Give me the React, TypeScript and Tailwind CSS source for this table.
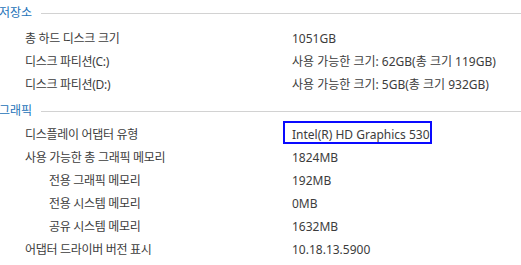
import React from "react";

type Row = { label: string; value: string; indent?: boolean; boxed?: boolean };

const storage: Row[] = [
  { label: "총 하드 디스크 크기", value: "1051GB" },
  { label: "디스크 파티션(C:)", value: "사용 가능한 크기: 62GB(총 크기 119GB)" },
  { label: "디스크 파티션(D:)", value: "사용 가능한 크기: 5GB(총 크기 932GB)" },
];

const graphics: Row[] = [
  { label: "디스플레이 어댑터 유형", value: "Intel(R) HD Graphics 530", boxed: true },
  { label: "사용 가능한 총 그래픽 메모리", value: "1824MB" },
  { label: "전용 그래픽 메모리", value: "192MB", indent: true },
  { label: "전용 시스템 메모리", value: "0MB", indent: true },
  { label: "공유 시스템 메모리", value: "1632MB", indent: true },
  { label: "어댑터 드라이버 버전 표시", value: "10.18.13.5900" },
];

function Header({ title }: { title: string }) {
  return (
    <div className="flex h-[23px] items-center">
      <span className="ml-[-1px] text-[12px] leading-[23px] text-[#2372b8]">{title}</span>
      <div className="ml-[9px] mt-[2px] h-px flex-1 bg-[#d2d2d2]" />
    </div>
  );
}

function InfoRow({ row }: { row: Row }) {
  return (
    <div className="flex h-[23px] items-center text-[12px] leading-[23px] text-[#3c3c3c]">
      <div
        className={
          row.indent
            ? "w-[292px] pl-[49px] tracking-[-0.3px]"
            : "w-[292px] pl-[25px] tracking-[-0.3px]"
        }
      >
        {row.label}
      </div>
      <div className="relative whitespace-nowrap">
        {row.boxed && (
          <div className="absolute left-[-9px] top-[-2px] h-[23px] w-[149px] border-2 border-[#0a0aff]" />
        )}
        {row.value}
      </div>
    </div>
  );
}

export default function App() {
  return (
    <div
      className="h-[265px] w-[521px] overflow-hidden bg-white pt-[1px]"
      style={{ fontFamily: '"Noto Sans", "Noto Sans CJK KR", sans-serif' }}
    >
      <Header title="저장소" />
      <div className="mt-[3px]">
        {storage.map((r) => (
          <InfoRow key={r.label} row={r} />
        ))}
      </div>
      <div className="mt-[3px]">
        <Header title="그래픽" />
      </div>
      <div className="mt-[1px]">
        {graphics.map((r) => (
          <InfoRow key={r.label} row={r} />
        ))}
      </div>
    </div>
  );
}
